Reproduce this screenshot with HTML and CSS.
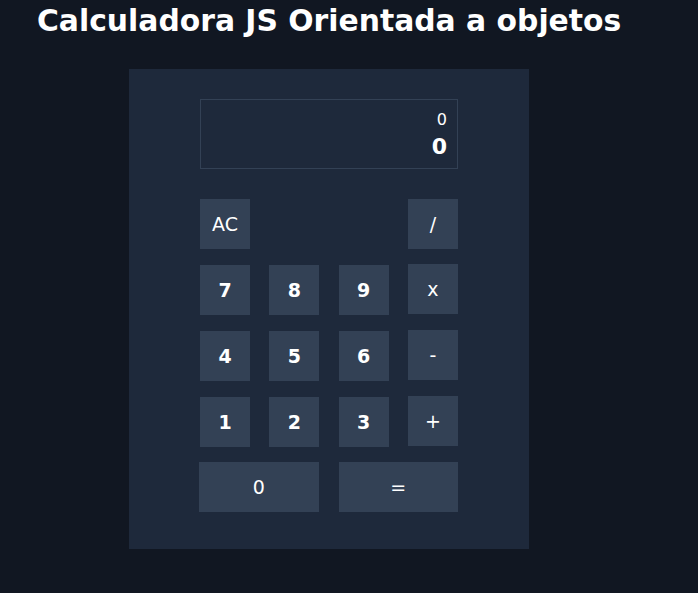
FILE: index.html
```html
<!DOCTYPE html>
<html lang="es">
<head>
<meta charset="utf-8">
<title>Calculadora JS</title>
<link rel="stylesheet" href="styles.css">
</head>
<body>
<h1 class="title">Calculadora JS Orientada a objetos</h1>
<main class="calc">
  <div class="display">
    <div class="prev">0</div>
    <div class="curr">0</div>
  </div>
  <div class="keys">
    <div class="row">
      <button class="key op">AC</button>
      <button class="key op">/</button>
    </div>
    <div class="row">
      <button class="key num">7</button>
      <button class="key num">8</button>
      <button class="key num">9</button>
      <button class="key op up">x</button>
    </div>
    <div class="row">
      <button class="key num">4</button>
      <button class="key num">5</button>
      <button class="key num">6</button>
      <button class="key op up">-</button>
    </div>
    <div class="row">
      <button class="key num">1</button>
      <button class="key num">2</button>
      <button class="key num">3</button>
      <button class="key op up">+</button>
    </div>
    <div class="row last">
      <button class="key wide">0</button>
      <button class="key wide">=</button>
    </div>
  </div>
</main>
</body>
</html>
```
FILE: styles.css
```css
html, body {
  margin: 0;
  padding: 0;
  background: #111722;
  color: #ffffff;
  font-family: "DejaVu Sans", "Open Sans", sans-serif;
}
.title {
  margin: 0;
  padding: 3px 0 0 37px;
  font-size: 29.8px;
  line-height: 36px;
  font-weight: 700;
  height: 67px;
  box-sizing: border-box;
}
.calc {
  margin: 2px 0 0 129px;
  width: 400px;
  height: 480px;
  box-sizing: border-box;
  background: #1e293b;
  padding: 30px 71px 0 71px;
}
.display {
  width: 258px;
  height: 70px;
  box-sizing: border-box;
  border: 1px solid #334155;
  padding: 10px 10px 0 0;
  text-align: right;
}
.prev {
  font-size: 16px;
  line-height: 20px;
}
.curr {
  margin-top: 3px;
  font-size: 22px;
  font-weight: 700;
  line-height: 28px;
}
.keys {
  margin-top: 30px;
  display: flex;
  flex-direction: column;
  gap: 16px;
}
.row {
  display: flex;
  justify-content: space-between;
  align-items: flex-start;
  height: 50px;
}
.key {
  width: 50px;
  height: 50px;
  border: 0;
  padding: 0;
  margin: 0;
  background: #334155;
  color: #ffffff;
  font-family: inherit;
  font-size: 19px;
  font-weight: 400;
}
.num { font-weight: 700; }
.up { margin-top: -1px; }
.last {
  justify-content: flex-start;
  gap: 20px;
  margin-left: -1px;
  margin-top: -1px;
}
.wide { width: 120px; }
```
